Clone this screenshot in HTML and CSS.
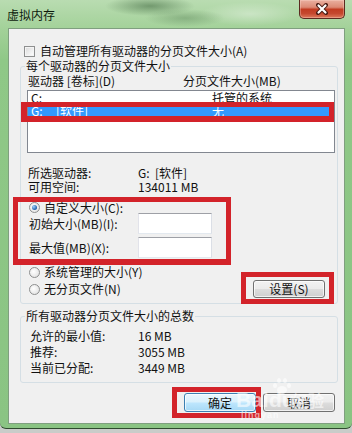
FILE: index.html
```html
<!DOCTYPE html>
<html lang="zh-CN">
<head>
<meta charset="utf-8">
<title>虚拟内存</title>
<link rel="stylesheet" href="styles.css">
</head>
<body>
<div class="window">
  <div class="titlebar">
    <span class="title">虚拟内存</span>
    <div class="close">
      <svg width="12" height="12" viewBox="0 0 12 12">
        <path d="M2 2 L10 10 M10 2 L2 10" stroke="#4a1c14" stroke-width="4" stroke-linecap="round"/>
        <path d="M2.5 2.5 L9.5 9.5 M9.5 2.5 L2.5 9.5" stroke="#ffffff" stroke-width="2.2" stroke-linecap="round"/>
      </svg>
    </div>
  </div>
  <div class="client">
    <div class="chk-row"><span class="checkbox"></span><span>自动管理所有驱动器的分页文件大小(A)</span></div>

    <fieldset class="group g1">
      <legend>每个驱动器的分页文件大小</legend>
      <div class="cols"><span class="hc1">驱动器 [卷标](D)</span><span>分页文件大小(MB)</span></div>
      <div class="list">
        <div class="row"><span class="rc1">C:</span><span>托管的系统</span></div>
        <div class="row sel"><span class="rc1">G:&nbsp;&nbsp;&nbsp;&nbsp;&nbsp;[软件]</span><span>无</span></div>
      </div>
      <div class="info">
        <div class="kv"><span class="k">所选驱动器:</span><span>G:&nbsp;&nbsp;[软件]</span></div>
        <div class="kv"><span class="k">可用空间:</span><span>134011 MB</span></div>
      </div>
      <div class="radio-row first"><span class="radio on"></span><span>自定义大小(C):</span></div>
      <div class="input-row"><span class="ik">初始大小(MB)(I):</span><span class="input"></span></div>
      <div class="input-row second"><span class="ik">最大值(MB)(X):</span><span class="input"></span></div>
      <div class="bottom-opts">
        <div class="radios">
          <div class="radio-row"><span class="radio"></span><span>系统管理的大小(Y)</span></div>
          <div class="radio-row"><span class="radio"></span><span>无分页文件(N)</span></div>
        </div>
        <button class="btn set">设置(S)</button>
      </div>
    </fieldset>

    <fieldset class="group g2">
      <legend>所有驱动器分页文件大小的总数</legend>
      <div class="tot"><span class="tk">允许的最小值:</span><span>16 MB</span></div>
      <div class="tot"><span class="tk">推荐:</span><span>3055 MB</span></div>
      <div class="tot"><span class="tk">当前已分配:</span><span>3449 MB</span></div>
    </fieldset>

    <div class="actions">
      <button class="btn ok">确定</button>
      <button class="btn">取消</button>
    </div>
  </div>
</div>

<div class="mark m1"></div>
<div class="mark m2"></div>
<div class="mark m3"></div>
<div class="mark m4"></div>

<div class="watermark">
  <span class="wm-bai">Bai</span><span class="wm-du">du</span><span class="wm-jy">经验</span>
  <span class="wm-small">jingyan</span>
  <span class="paw"><i></i><i></i><i></i><i></i><b></b></span>
</div>
</body>
</html>
```

FILE: styles.css
```css
* { box-sizing: border-box; }
html, body { margin: 0; padding: 0; }
body {
  width: 352px;
  height: 433px;
  overflow: hidden;
  position: relative;
  background: linear-gradient(#3d4a3d 0, #3d4a3d 2px, #c9ccc9 2px);
  font-family: "Noto Sans CJK SC", "Noto Sans", sans-serif;
  font-size: 12px;
  line-height: 14px;
  color: #111;
}

.window {
  width: 352px;
  height: 429px;
  display: flex;
  flex-direction: column;
  border-bottom: 1px solid #2f4a2f;
  border-radius: 0 0 6px 6px;
  background:
    radial-gradient(ellipse 45px 10px at 150px 6px, rgba(60, 100, 60, 0.55), rgba(60,100,60,0)),
    radial-gradient(ellipse 40px 9px at 185px 18px, rgba(70, 110, 70, 0.35), rgba(70,110,70,0)),
    radial-gradient(ellipse 50px 12px at 250px 14px, rgba(255, 255, 255, 0.35), rgba(255,255,255,0)),
    linear-gradient(#b9dcb1, #a2d198 30px, #8fc887 60px, #8ac483);
}

.titlebar {
  height: 28px;
  display: flex;
  align-items: flex-start;
}
.title {
  margin: 8px 0 0 7px;
  line-height: 14px;
  color: #0d1a0d;
}
.close {
  margin-left: auto;
  margin-right: 7px;
  width: 46px;
  height: 19px;
  display: flex;
  align-items: center;
  justify-content: center;
  border: 1px solid #5b2a20;
  border-top: none;
  border-radius: 0 0 5px 5px;
  background: linear-gradient(#eab0a0 0%, #dc8a75 40%, #c23c22 52%, #c5482f 75%, #dd7a5c 100%);
  box-shadow: inset 0 0 0 1px rgba(255, 220, 210, 0.35);
}

.client {
  margin: 0 7px 0 8px;
  height: 396px;
  background: #f0f0f0;
  border: 1px solid #7f9f7f;
  display: flex;
  flex-direction: column;
}

.chk-row {
  margin: 15px 0 0 15px;
  height: 14px;
  display: flex;
  align-items: center;
}
.checkbox {
  width: 11px;
  height: 11px;
  margin-right: 5px;
  border: 1px solid #8e8f8f;
  background: linear-gradient(135deg, #d9d9d9, #f4f4f4 70%, #ffffff);
  box-shadow: inset 0 0 0 1px #f4f4f4;
}

.group {
  margin: 0 0 0 11px;
  width: 318px;
  border: 1px solid #d5dfe5;
  border-radius: 3px;
  min-width: 0;
}
.group legend {
  padding: 0 1px;
  margin-left: -2px;
  line-height: 14px;
}
.g1 {
  margin-top: 1px;
  padding: 1px 0 5px 6px;
}
.g2 {
  margin-top: 5px;
  padding: 5px 0 6px 6px;
}

.cols {
  height: 14px;
  padding-left: 1px;
  display: flex;
}
.hc1 { width: 155px; }

.list {
  margin-top: 2px;
  width: 308px;
  height: 63px;
  border: 1px solid #828790;
  background: #fff;
}
.row {
  height: 13px;
  line-height: 13px;
  padding-left: 3px;
  display: flex;
}
.rc1 { width: 181px; }
.row.sel {
  background: #3399ff;
  color: #fff;
}

.info { margin-top: 13px; padding-left: 1px; }
.kv { height: 14px; display: flex; }
.k { width: 110px; }

.radio-row {
  display: flex;
  align-items: center;
  padding-left: 2px;
  height: 16px;
}
.radio-row.first {
  margin-top: 8px;
  height: 11px;
}
.radio {
  width: 11px;
  height: 11px;
  margin-right: 4px;
  border-radius: 50%;
  border: 1px solid #8e8f8f;
  background: radial-gradient(circle at 40% 40%, #ffffff, #dcdcdc);
  position: relative;
  flex: none;
}
.radio.on::after {
  content: "";
  position: absolute;
  left: 2px;
  top: 2px;
  width: 5px;
  height: 5px;
  border-radius: 50%;
  background: radial-gradient(circle at 35% 35%, #9fd3ff, #1f5ea8 70%);
}

.input-row {
  height: 21px;
  display: flex;
  align-items: center;
  padding-left: 2px;
}
.input-row.second { margin-top: 3px; }
.ik { width: 109px; }
.input {
  width: 74px;
  height: 21px;
  background: #fff;
  border: 1px solid #abadb3;
  border-top-color: #9ea0a6;
  border-left-color: #e2e3ea;
  border-right-color: #dbdfe6;
  border-bottom-color: #e3e9ef;
}

.bottom-opts {
  margin-top: 6px;
  display: flex;
  justify-content: space-between;
  align-items: flex-start;
}
.radios {
  display: flex;
  flex-direction: column;
  gap: 1px;
}

.btn {
  font: inherit;
  line-height: 14px;
  color: #111;
  padding: 0;
  height: 19px;
  width: 72px;
  border: 1px solid #707070;
  border-radius: 3px;
  background: linear-gradient(#f2f2f2 0%, #ebebeb 49%, #dddddd 51%, #cfcfcf 100%);
  box-shadow: inset 0 0 0 1px rgba(255, 255, 255, 0.7);
}
.btn.set {
  margin-top: 16px;
  margin-right: 12px;
  height: 18px;
}

.tot {
  height: 16px;
  display: flex;
  align-items: center;
  padding-left: 3px;
}
.tk { width: 108px; }

.actions {
  margin-top: 10px;
  padding-right: 9px;
  display: flex;
  justify-content: flex-end;
  gap: 7px;
}
.btn.ok {
  border-color: #3c7fb1;
  background: linear-gradient(#eaf6fd 0%, #d9f0fc 49%, #bee6fd 51%, #a7d9f5 100%);
}

.mark {
  position: absolute;
  border: 5px solid #d3232a;
}
.m1 { left: 21px; top: 102px; width: 313px; height: 20px; border-width: 5px 5px 6px 6px; }
.m2 { left: 13px; top: 197px; width: 218px; height: 68px; border-width: 5px 5px 6px 5px; }
.m3 { left: 241px; top: 272px; width: 93px; height: 32px; }
.m4 { left: 172px; top: 387px; width: 89px; height: 31px; }

.watermark {
  position: absolute;
  left: 236px;
  top: 378px;
  width: 100px;
  height: 45px;
  color: rgba(255, 255, 255, 0.6);
  font-family: "Liberation Sans", Arial, sans-serif;
  pointer-events: none;
}
.wm-bai, .wm-du {
  position: absolute;
  top: 11px;
  font-size: 21px;
  line-height: 21px;
  font-weight: bold;
}
.wm-bai { left: 0; }
.wm-du { left: 33px; }
.wm-jy {
  position: absolute;
  left: 56px;
  top: 14px;
  font-family: "Noto Sans CJK SC", sans-serif;
  font-size: 16px;
  line-height: 16px;
  font-weight: bold;
}
.wm-small {
  position: absolute;
  left: 5px;
  top: 33px;
  font-size: 9px;
  line-height: 9px;
  font-weight: bold;
  letter-spacing: 1px;
}
.paw {
  position: absolute;
  left: 37px;
  top: 0;
  width: 18px;
  height: 16px;
}
.paw i, .paw b {
  position: absolute;
  background: rgba(255, 255, 255, 0.6);
  border-radius: 50%;
}
.paw i { width: 4px; height: 5px; }
.paw i:nth-child(1) { left: 0; top: 5px; }
.paw i:nth-child(2) { left: 4px; top: 0; }
.paw i:nth-child(3) { left: 10px; top: 0; }
.paw i:nth-child(4) { left: 14px; top: 5px; }
.paw b { left: 4px; top: 8px; width: 10px; height: 8px; }
```
